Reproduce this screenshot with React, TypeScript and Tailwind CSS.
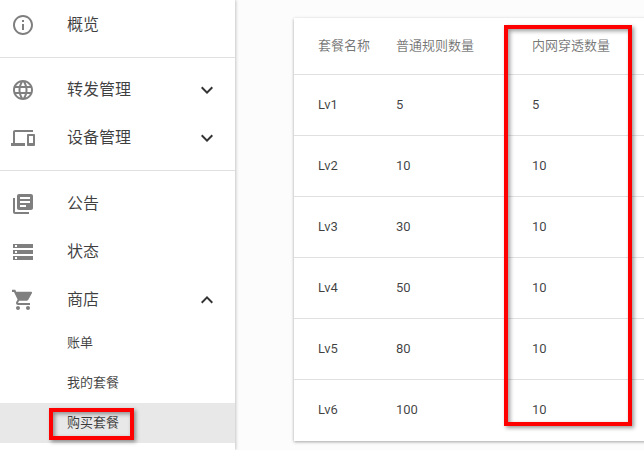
const F = "font-['Roboto','Noto_Sans_CJK_SC',sans-serif]";

function Ico({ d, className = "" }: { d: string; className?: string }) {
  return (
    <svg viewBox="0 0 24 24" width="24" height="24" className={"shrink-0 fill-[#000]/50 " + className}>
      <path d={d} />
    </svg>
  );
}

const info = "M11 7h2v2h-2zm0 4h2v6h-2zm1-9C6.48 2 2 6.48 2 12s4.48 10 10 10 10-4.48 10-10S17.52 2 12 2zm0 18c-4.41 0-8-3.59-8-8s3.59-8 8-8 8 3.59 8 8-3.59 8-8 8z";
const language = "M11.99 2C6.47 2 2 6.48 2 12s4.47 10 9.99 10C17.52 22 22 17.52 22 12S17.52 2 11.99 2zm6.93 6h-2.95c-.32-1.25-.78-2.45-1.38-3.56 1.84.63 3.37 1.91 4.33 3.56zM12 4.04c.83 1.2 1.48 2.53 1.91 3.96h-3.82c.43-1.43 1.08-2.76 1.91-3.96zM4.26 14C4.1 13.36 4 12.69 4 12s.1-1.36.26-2h3.38c-.08.66-.14 1.32-.14 2 0 .68.06 1.34.14 2H4.26zm.82 2h2.95c.32 1.25.78 2.45 1.38 3.56-1.84-.63-3.37-1.9-4.33-3.56zm2.95-8H5.08c.96-1.66 2.49-2.93 4.33-3.56C8.81 5.55 8.35 6.75 8.03 8zM12 19.96c-.83-1.2-1.48-2.53-1.91-3.96h3.82c-.43 1.43-1.08 2.76-1.91 3.96zM14.34 14H9.66c-.09-.66-.16-1.32-.16-2 0-.68.07-1.35.16-2h4.68c.09.65.16 1.32.16 2 0 .68-.07 1.34-.16 2zm.25 5.56c.6-1.11 1.06-2.31 1.38-3.56h2.95c-.96 1.65-2.49 2.93-4.33 3.56zM16.36 14c.08-.66.14-1.32.14-2 0-.68-.06-1.34-.14-2h3.38c.16.64.26 1.31.26 2s-.1 1.36-.26 2h-3.38z";
const devices = "M4 6h18V4H4c-1.1 0-2 .9-2 2v11H0v3h14v-3H4V6zm19 2h-6c-.55 0-1 .45-1 1v10c0 .55.45 1 1 1h6c.55 0 1-.45 1-1V9c0-.55-.45-1-1-1zm-1 9h-4v-7h4v7z";
const books = "M4 6H2v14c0 1.1.9 2 2 2h14v-2H4V6zm16-4H8c-1.1 0-2 .9-2 2v12c0 1.1.9 2 2 2h12c1.1 0 2-.9 2-2V4c0-1.1-.9-2-2-2zm-1 9H9V9h10v2zm-4 4H9v-2h6v2zm4-8H9V5h10v2z";
const storage = "M2 20h20v-4H2v4zm2-3h2v2H4v-2zM2 4v4h20V4H2zm4 3H4V5h2v2zm-4 7h20v-4H2v4zm2-3h2v2H4v-2z";
const cart = "M7 18c-1.1 0-1.99.9-1.99 2S5.9 22 7 22s2-.9 2-2-.9-2-2-2zM1 2v2h2l3.6 7.59-1.35 2.45c-.16.28-.25.61-.25.96 0 1.1.9 2 2 2h12v-2H7.42c-.14 0-.25-.11-.25-.25l.03-.15.9-1.8h7.45c.75 0 1.41-.41 1.75-1.03l3.58-6.49c.08-.14.12-.31.12-.48 0-.55-.45-1-1-1H5.21l-.94-2H1zm16 16c-1.1 0-1.99.9-1.99 2s.89 2 1.99 2 2-.9 2-2-.9-2-2-2z";
const more = "M16.59 8.59L12 13.17 7.41 8.59 6 10l6 6 6-6z";
const less = "M12 8l-6 6 1.41 1.41L12 10.83l4.59 4.58L18 14z";

function Item({ icon, label, chevron }: { icon: string; label: string; chevron?: string }) {
  return (
    <div className="flex h-12 items-center pl-[11px] pr-[16px]">
      <Ico d={icon} />
      <span className="ml-[32px] flex-1 text-[16px] text-[#000]/75">{label}</span>
      {chevron && <svg viewBox="0 0 24 24" width="24" height="24" className="fill-[#000]/80"><path d={chevron} /></svg>}
    </div>
  );
}

function Sub({ label, active }: { label: string; active?: boolean }) {
  return (
    <div className={"flex h-10 items-center pl-[67px] text-[13px] text-[#000]/75 " + (active ? "bg-[#e8e8e8]" : "")}>{label}</div>
  );
}

const rows = [
  ["Lv1", "5", "5"],
  ["Lv2", "10", "10"],
  ["Lv3", "30", "10"],
  ["Lv4", "50", "10"],
  ["Lv5", "80", "10"],
  ["Lv6", "100", "10"],
];

export default function App() {
  return (
    <div className={F + " relative flex h-[450px] w-[644px] overflow-hidden bg-[#fcfcfc]"}>
      <aside className="h-full w-[235px] shrink-0 bg-white pt-[1px] shadow-[1px_0_3px_rgba(0,0,0,0.22)]">
        <Item icon={info} label="概览" />
        <div className="mt-[8px] h-px bg-[#e0e0e0]" />
        <div className="mt-[8px]">
          <Item icon={language} label="转发管理" chevron={more} />
          <Item icon={devices} label="设备管理" chevron={more} />
        </div>
        <div className="mt-[8px] h-px bg-[#e0e0e0]" />
        <div className="mt-[9px]">
          <Item icon={books} label="公告" />
          <Item icon={storage} label="状态" />
          <Item icon={cart} label="商店" chevron={less} />
          <div className="mt-[-1px]">
            <Sub label="账单" />
            <Sub label="我的套餐" />
            <Sub label="购买套餐" active />
          </div>
        </div>
      </aside>

      <main className="flex-1 pl-[59px] pt-[18px]">
        <div className="w-[500px] bg-white shadow-[0_1px_3px_rgba(0,0,0,0.35)]">
          <div className="grid h-[57px] grid-cols-[78px_136px_1fr] items-center border-b border-[#e0e0e0] pl-[24px] text-[13px] text-[#000]/55">
            <span>套餐名称</span>
            <span>普通规则数量</span>
            <span>内网穿透数量</span>
          </div>
          {rows.map((r, i) => (
            <div key={r[0]} className={"grid h-[61px] grid-cols-[78px_136px_1fr] items-center border-b pl-[24px] text-[13px] text-[#000]/75 " + (i < 5 ? "border-[#e0e0e0]" : "border-transparent")}>
              <span>{r[0]}</span>
              <span>{r[1]}</span>
              <span>{r[2]}</span>
            </div>
          ))}
        </div>
      </main>

      <div className="absolute left-[504px] top-[25px] h-[401px] w-[128px] border-[4px] border-[#f00] shadow-[2px_2px_4px_rgba(0,0,0,0.4),inset_2px_2px_4px_rgba(0,0,0,0.4)]" />
      <div className="absolute left-[49px] top-[408px] h-[32px] w-[85px] border-[4px] border-[#f00] shadow-[2px_2px_4px_rgba(0,0,0,0.4),inset_2px_2px_4px_rgba(0,0,0,0.4)]" />
    </div>
  );
}
